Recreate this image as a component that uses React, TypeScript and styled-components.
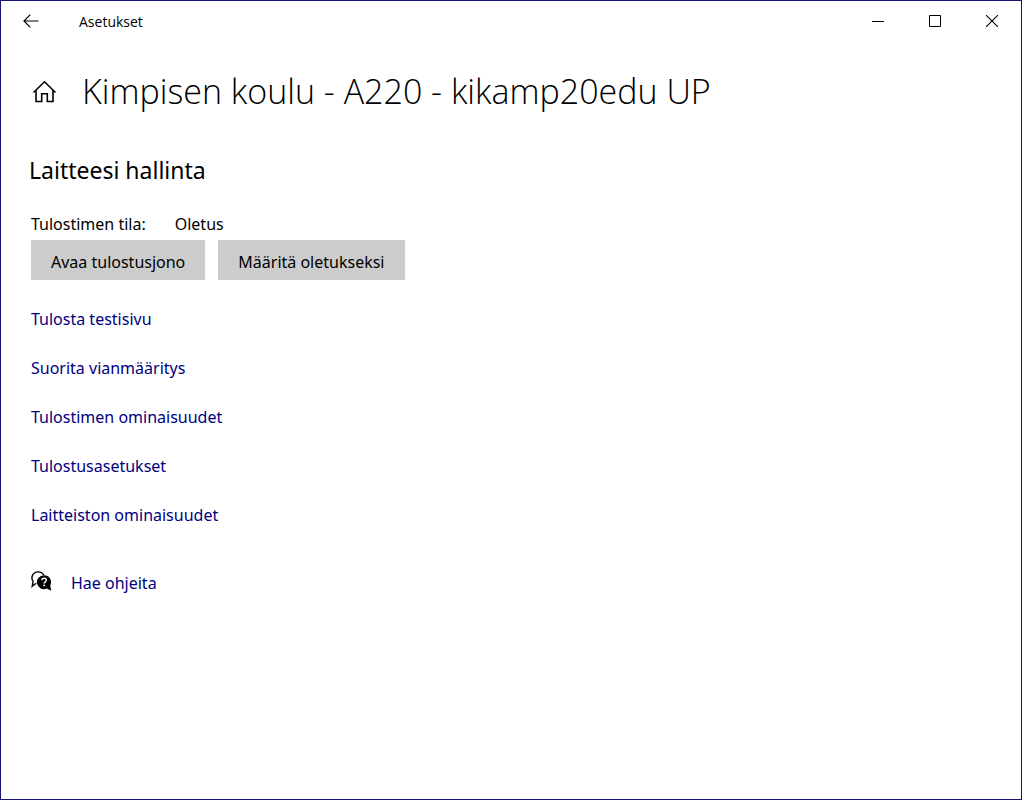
import React from "react";
import styled, { createGlobalStyle } from "styled-components";

const GlobalStyle = createGlobalStyle`
  *, *::before, *::after { box-sizing: border-box; }
  body {
    margin: 0;
    background: #fff;
    color: #000;
    font-family: "Segoe UI", "Noto Sans", "Open Sans", sans-serif;
    font-size: 16px;
    line-height: 24px;
  }
`;

const Window = styled.div`
  min-height: 100vh;
  border: 1px solid #14127f;
  background: #fff;
`;

const TitleBar = styled.header`
  display: flex;
  align-items: center;
  height: 40px;
  padding: 0 1px;
`;

const CaptionButton = styled.button`
  display: flex;
  align-items: center;
  justify-content: center;
  width: 57px;
  height: 40px;
  padding: 0;
  border: 0;
  background: transparent;
  color: #000;
`;

const AppName = styled.span`
  flex: 1;
  padding: 2px 0 0 20px;
  font-family: "Segoe UI", "Open Sans", sans-serif;
  font-size: 14px;
  line-height: 20px;
`;

const Content = styled.main`
  padding: 26px 30px;
`;

const PageHeader = styled.div`
  display: flex;
  align-items: center;
  gap: 25px;
  margin-bottom: 39px;
`;

const HomeButton = styled.button`
  display: flex;
  padding: 0;
  border: 0;
  background: transparent;
  color: #000;
`;

const PageTitle = styled.h1`
  margin: 0;
  font-family: "Segoe UI", "Open Sans", sans-serif;
  font-size: 34px;
  line-height: 48px;
  font-weight: 300;
`;

const SectionTitle = styled.h2`
  margin: 0 0 26px -2px;
  font-size: 23px;
  line-height: 32px;
  font-weight: 400;
`;

const Status = styled.dl`
  display: flex;
  gap: 29px;
  margin: 0 0 4px;

  dt, dd { margin: 0; }
`;

const Actions = styled.div`
  display: flex;
  gap: 13px;
  margin-bottom: 27px;
`;

const ActionButton = styled.button`
  height: 40px;
  padding: 3px 20px 0;
  border: 0;
  background: #ccc;
  color: #000;
  font: inherit;
`;

const LinkList = styled.ul`
  display: flex;
  flex-direction: column;
  align-items: flex-start;
  gap: 25px;
  margin: 0 0 44px;
  padding: 0;
  list-style: none;
`;

const TextLink = styled.a`
  color: #00007f;
  text-decoration: none;
`;

const Help = styled.div`
  display: flex;
  align-items: flex-start;
  gap: 19px;
`;

const BackIcon = () => (
  <svg width="16" height="14" viewBox="0 0 16 14" fill="none" stroke="currentColor" strokeWidth="1.2" aria-hidden="true">
    <path d="M15.5 7H1M7.3 .7 1 7l6.3 6.3" />
  </svg>
);

const MinimizeIcon = () => (
  <svg width="12" height="14" viewBox="0 0 12 14" stroke="currentColor" aria-hidden="true">
    <path d="M0 7.5h12" />
  </svg>
);

const MaximizeIcon = () => (
  <svg width="12" height="12" viewBox="0 0 12 12" fill="none" stroke="currentColor" aria-hidden="true">
    <path d="M.5 .5h11v11H.5z" />
  </svg>
);

const CloseIcon = () => (
  <svg width="12" height="12" viewBox="0 0 12 12" stroke="currentColor" strokeWidth="1.1" aria-hidden="true">
    <path d="M0 0l12 12M12 0L0 12" />
  </svg>
);

const HomeIcon = () => (
  <svg width="26" height="24" viewBox="0 0 26 24" fill="none" stroke="currentColor" strokeWidth="1.6" aria-hidden="true">
    <path d="M2.5 13.5 13.5 2.8 24.5 13.5" />
    <path d="M5 11.3v11.2h5.7v-7.7h5.6v7.7H22V11.3" />
  </svg>
);

const HelpIcon = () => (
  <svg width="21" height="21" viewBox="0 0 21 21" aria-hidden="true">
    <path
      d="M5.2 12.3 1.2 15.4 2.1 10.4A6 6 0 0 1 7 .9c2.7 0 4.8 1.3 5.7 3.2"
      fill="none"
      stroke="#000"
      strokeWidth="1.4"
    />
    <path d="M13 4.2a7 7 0 0 1 6.2 10.3l1 5.3-4.5-2.2A7 7 0 1 1 13 4.2z" fill="#000" />
    <path
      d="M10.9 9.3c0-1.4 1-2.1 2.2-2.1s2.2.8 2.2 2c0 1.6-2.1 1.7-2.1 3.4"
      fill="none"
      stroke="#fff"
      strokeWidth="1.4"
    />
    <circle cx="13.2" cy="14.4" r=".95" fill="#fff" />
  </svg>
);

const links = [
  "Tulosta testisivu",
  "Suorita vianmääritys",
  "Tulostimen ominaisuudet",
  "Tulostusasetukset",
  "Laitteiston ominaisuudet",
];

export default function App() {
  return (
    <Window>
      <GlobalStyle />
      <TitleBar>
        <CaptionButton aria-label="Takaisin"><BackIcon /></CaptionButton>
        <AppName>Asetukset</AppName>
        <CaptionButton aria-label="Pienennä"><MinimizeIcon /></CaptionButton>
        <CaptionButton aria-label="Suurenna"><MaximizeIcon /></CaptionButton>
        <CaptionButton aria-label="Sulje"><CloseIcon /></CaptionButton>
      </TitleBar>
      <Content>
        <PageHeader>
          <HomeButton aria-label="Aloitus"><HomeIcon /></HomeButton>
          <PageTitle>Kimpisen koulu - A220 - kikamp20edu UP</PageTitle>
        </PageHeader>
        <SectionTitle>Laitteesi hallinta</SectionTitle>
        <Status>
          <dt>Tulostimen tila:</dt>
          <dd>Oletus</dd>
        </Status>
        <Actions>
          <ActionButton>Avaa tulostusjono</ActionButton>
          <ActionButton>Määritä oletukseksi</ActionButton>
        </Actions>
        <LinkList>
          {links.map((label) => (
            <li key={label}>
              <TextLink href="#">{label}</TextLink>
            </li>
          ))}
        </LinkList>
        <Help>
          <HelpIcon />
          <TextLink href="#">Hae ohjeita</TextLink>
        </Help>
      </Content>
    </Window>
  );
}
